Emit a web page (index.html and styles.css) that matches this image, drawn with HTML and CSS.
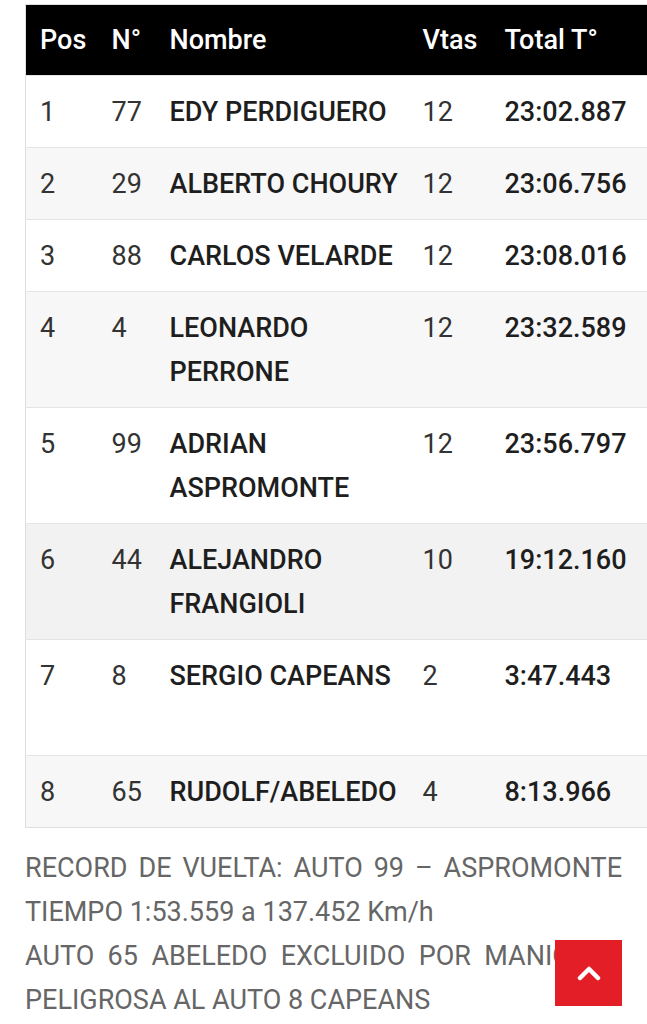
FILE: index.html
```html
<!DOCTYPE html>
<html lang="es">
<head>
<meta charset="utf-8">
<title>Resultados</title>
<link rel="stylesheet" href="styles.css">
</head>
<body>
<main class="content">
  <table class="results">
    <colgroup>
      <col class="c-pos"><col class="c-num"><col class="c-name"><col class="c-laps"><col class="c-time"><col class="c-extra">
    </colgroup>
    <thead>
      <tr><th>Pos</th><th>N°</th><th>Nombre</th><th>Vtas</th><th>Total T°</th><th></th></tr>
    </thead>
    <tbody>
      <tr><td>1</td><td>77</td><td class="name">EDY PERDIGUERO</td><td>12</td><td class="time">23:02.887</td><td></td></tr>
      <tr><td>2</td><td>29</td><td class="name">ALBERTO CHOURY</td><td>12</td><td class="time">23:06.756</td><td></td></tr>
      <tr><td>3</td><td>88</td><td class="name">CARLOS VELARDE</td><td>12</td><td class="time">23:08.016</td><td></td></tr>
      <tr><td>4</td><td>4</td><td class="name">LEONARDO PERRONE</td><td>12</td><td class="time">23:32.589</td><td></td></tr>
      <tr><td>5</td><td>99</td><td class="name">ADRIAN ASPROMONTE</td><td>12</td><td class="time">23:56.797</td><td></td></tr>
      <tr class="shade"><td>6</td><td>44</td><td class="name">ALEJANDRO FRANGIOLI</td><td>10</td><td class="time">19:12.160</td><td></td></tr>
      <tr class="tall"><td>7</td><td>8</td><td class="name">SERGIO CAPEANS</td><td>2</td><td class="time">3:47.443</td><td></td></tr>
      <tr><td>8</td><td>65</td><td class="name">RUDOLF/ABELEDO</td><td>4</td><td class="time">8:13.966</td><td></td></tr>
    </tbody>
  </table>
  <p class="note">RECORD DE VUELTA: AUTO 99 – ASPROMONTE TIEMPO 1:53.559 a 137.452 Km/h</p>
  <p class="note">AUTO 65 ABELEDO EXCLUIDO POR MANIOBRA PELIGROSA AL AUTO 8 CAPEANS</p>
</main>
<a class="to-top" href="#" aria-label="Volver arriba">
  <svg width="24" height="18" viewBox="0 0 24 18"><path d="M3 14 L12 5 L21 14" fill="none" stroke="#fff" stroke-width="4.5" stroke-linecap="round" stroke-linejoin="round"/></svg>
</a>
</body>
</html>
```

FILE: styles.css
```css
html, body {
  margin: 0;
  padding: 0;
  background: #fff;
  overflow-x: hidden;
}
body {
  font-family: Roboto, "Liberation Sans", Arial, sans-serif;
  color: #333;
}
.content {
  padding: 4px 25px 40px;
  width: 597px;
}
.results {
  border-collapse: collapse;
  table-layout: fixed;
  width: 760px;
  border: 1px solid #dedede;
  font-size: 27px;
}
.c-pos { width: 72px; }
.c-num { width: 58px; }
.c-name { width: 253px; }
.c-laps { width: 82px; }
.c-time { width: 160px; }
.c-extra { width: 135px; }
.results th {
  background: #000;
  color: #fff;
  font-weight: 500;
  font-size: 27px;
  text-align: left;
  line-height: 44px;
  padding: 13px 4px 13px 14px;
}
.results td {
  text-align: left;
  vertical-align: top;
  line-height: 44px;
  padding: 14px 4px 13px 14px;
  border-top: 1px solid #e4e4e4;
  color: #333;
}
.results tbody tr:nth-child(even) { background: #f7f7f7; }
.results tbody tr.shade { background: #f2f2f2; }
.results tr.tall td:first-child { height: 88px; }
.results td.name,
.results td.time {
  font-weight: 500;
  color: #1e1e1e;
}
.note {
  margin: 18px 0 0;
  color: #666;
  font-size: 27px;
  line-height: 44px;
  text-align: justify;
}
.note + .note { margin-top: 0; }
.to-top {
  position: fixed;
  right: 25px;
  bottom: 18px;
  width: 67px;
  height: 66px;
  background: #e41e26;
  display: flex;
  align-items: center;
  justify-content: center;
}
```
